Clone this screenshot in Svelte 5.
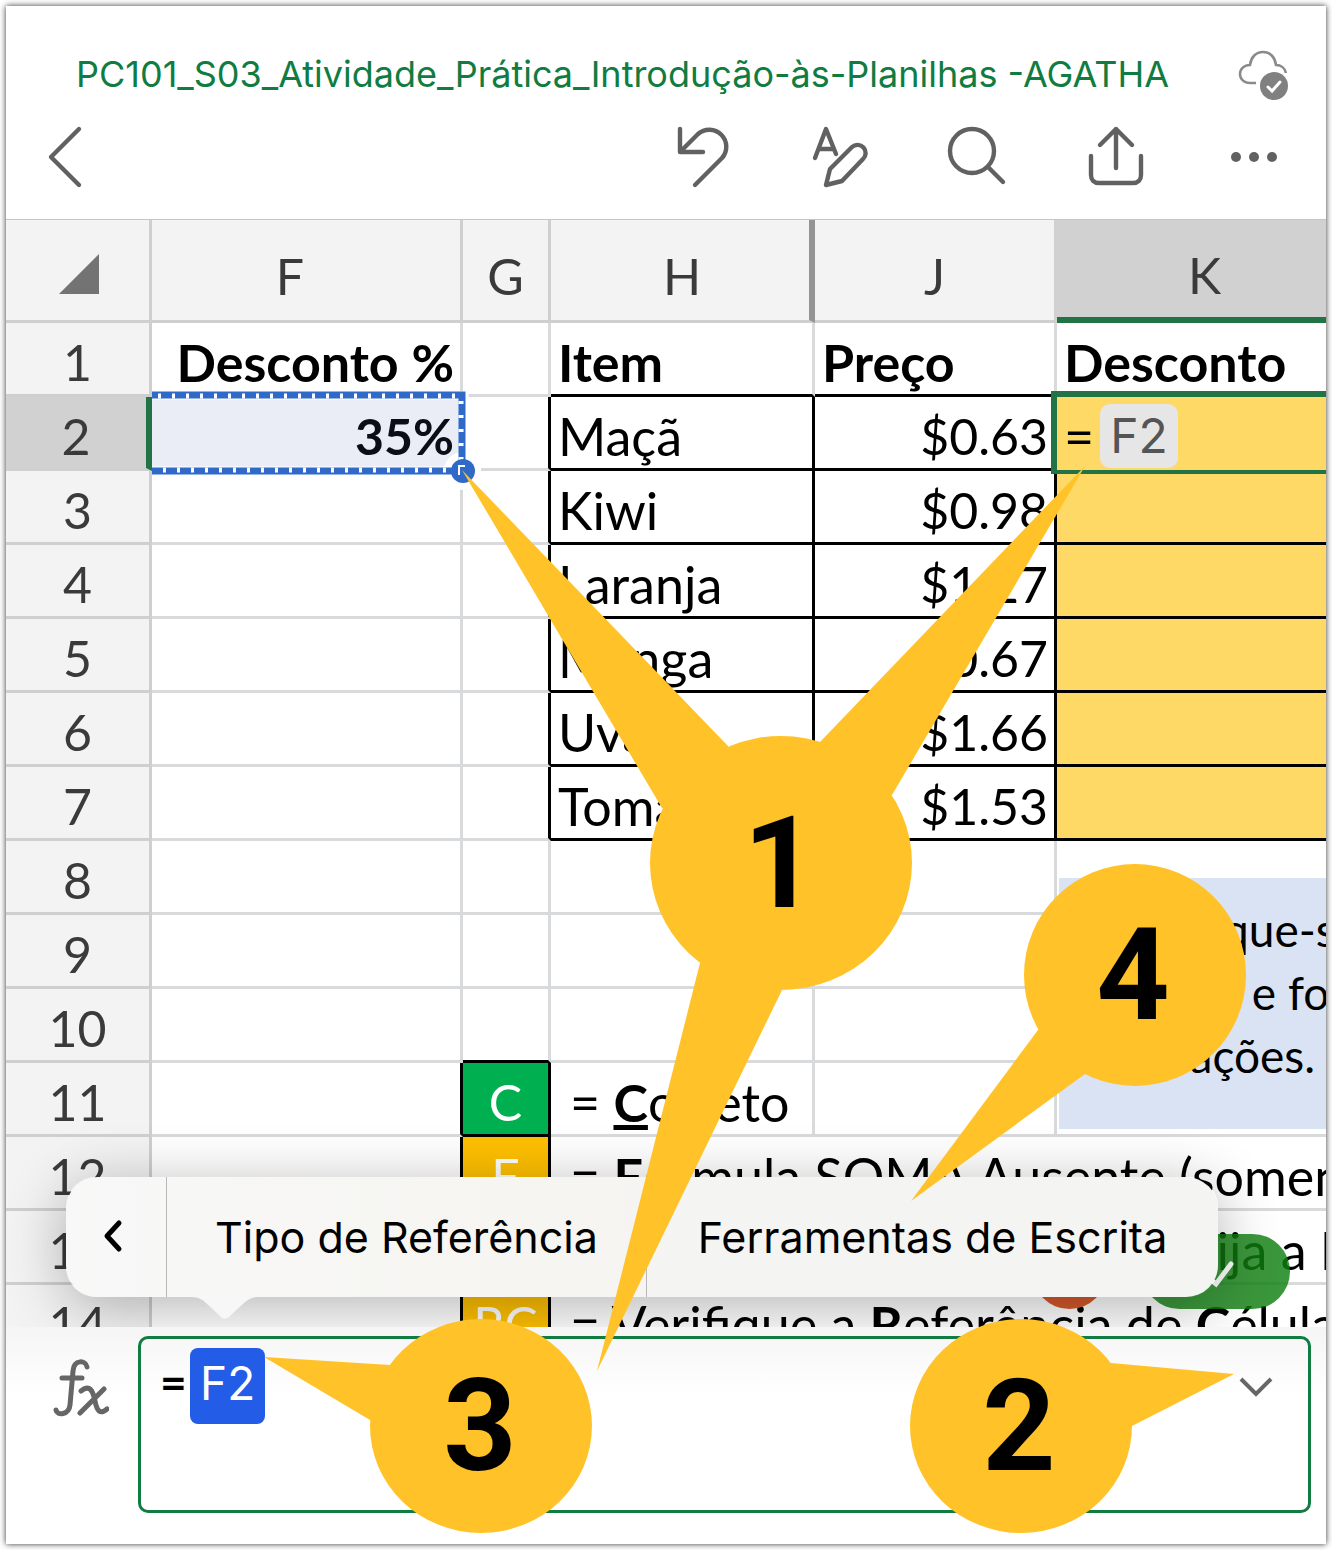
<script>
  const columns = ['F', 'G', 'H', 'J', 'K'];

  const items = [
    { name: 'Maçã', price: '$0.63' },
    { name: 'Kiwi', price: '$0.98' },
    { name: 'Laranja', price: '$1.27' },
    { name: 'Manga', price: '$0.67' },
    { name: 'Uva', price: '$1.66' },
    { name: 'Tomate', price: '$1.53' },
  ];

  const callouts = [
    {
      label: '1',
      cx: 781,
      cy: 863,
      rx: 131,
      ry: 127,
      x: 780,
      y: 907,
      tails: ['462,470 728,746 781,863 662,808', '1085,466 892,795 781,863 820,742', '597,1371 700,963 781,863 782,990'],
    },
    { label: '2', cx: 1021, cy: 1426, rx: 111, ry: 107, x: 1019, y: 1470, tails: ['1234,1374 1111,1363 1021,1426 1132,1426'] },
    { label: '3', cx: 481, cy: 1426, rx: 111, ry: 107, x: 480, y: 1470, tails: ['264,1357 390,1365 481,1426 370,1420'] },
    { label: '4', cx: 1135, cy: 975, rx: 111, ry: 111, x: 1133, y: 1019, tails: ['911,1201 1038,1030 1135,975 1085,1074'] },
  ];
</script>

<div class="frame">
  <main>
    <header>
      <div class="title-row">
        <h1>PC101_S03_Atividade_Prática_Introdução-às-Planilhas -AGATHA</h1>
        <svg class="cloud" viewBox="0 -2 52 52" aria-label="Salvo">
          <path
            d="M18 33h-6C6 33 2 29 2 24s4-9 10-9c1-8 6-13 13-13s12 5 13 13c5 0 9 3 10 8"
            fill="none"
            stroke="#8a8a8a"
            stroke-width="2.5"
          />
          <circle cx="36" cy="36" r="16" fill="#fff" />
          <circle cx="36" cy="36" r="14" fill="#808080" />
          <path d="M30 37l4 4 8-9" fill="none" stroke="#fff" stroke-width="3" stroke-linecap="round" />
        </svg>
      </div>
      <div class="toolbar">
        <button aria-label="Voltar">
          <svg viewBox="0 0 64 64"><path d="M45 4 17 32l28 28" /></svg>
        </button>
        <span class="spacer"></span>
        <button aria-label="Desfazer">
          <svg viewBox="0 0 64 64"><path d="M10 4v23h23M10 27 28 9a17 17 0 0 1 24 24L25 60" /></svg>
        </button>
        <button aria-label="Formatar">
          <svg viewBox="0 0 64 64">
            <path d="M7 33 18 4l10 25M11 24h14M18 60l4-16 22-22a8 8 0 0 1 11 12L34 56z" />
          </svg>
        </button>
        <button aria-label="Pesquisar">
          <svg viewBox="0 0 64 64"><circle cx="26" cy="26" r="22" /><path d="M42 42l15 15" /></svg>
        </button>
        <button aria-label="Compartilhar">
          <svg viewBox="0 0 64 64">
            <path d="M32 43V4M16 20 32 4l16 16M7 31v19c0 5 3 8 8 8h34c5 0 8-3 8-8V31" />
          </svg>
        </button>
        <button aria-label="Mais">
          <svg class="dots" viewBox="0 0 64 64">
            <circle cx="14" cy="32" r="5" /><circle cx="32" cy="32" r="5" /><circle cx="50" cy="32" r="5" />
          </svg>
        </button>
      </div>
    </header>

    <section class="sheet">
      <table>
        <colgroup>
          <col class="col-row" />
          <col class="col-f" />
          <col class="col-g" />
          <col class="col-h" />
          <col class="col-j" />
          <col class="col-k" />
        </colgroup>
        <thead>
          <tr>
            <th class="corner"><svg viewBox="0 0 40 40"><path d="M40 0v40H0z" /></svg></th>
            {#each columns as column}
              <th class="head-{column.toLowerCase()}">{column}</th>
            {/each}
          </tr>
        </thead>
        <tbody>
          <tr class="titles">
            <th>1</th>
            <td class="right">Desconto %</td>
            <td></td>
            <td class="under">Item</td>
            <td class="under">Preço</td>
            <td class="under">Desconto</td>
          </tr>
          {#each items as item, i}
            <tr>
              <th class:active={i === 0}>{i + 2}</th>
              {#if i === 0}
                <td class="right number picked">
                  35%
                  <svg class="ants" viewBox="0 0 332 100">
                    <circle cx="314" cy="80" r="19" fill="#fff" />
                    <path d="M3 4h312v76H3" fill="none" stroke="#fff" stroke-width="9" />
                    <path d="M3 4h310v76H3" fill="none" stroke="#306ac8" stroke-width="7" />
                    <path d="M3 5h309v74H3" fill="none" stroke="#fff" stroke-width="5" stroke-dasharray="3 11" stroke-dashoffset="-6" />
                    <circle cx="314" cy="80" r="12" fill="#306ac8" />
                    <path d="M310 84v-9h6" fill="none" stroke="#fff" stroke-width="2" />
                  </svg>
                </td>
              {:else}
                <td></td>
              {/if}
              <td class="edge"></td>
              <td class="boxed">{item.name}</td>
              <td class="boxed right number">{item.price}</td>
              <td class="boxed gold" class:selected={i === 0}>
                {#if i === 0}
                  <div class="editing">=<span>F2</span></div>
                {/if}
              </td>
            </tr>
          {/each}
          {#each [8, 9, 10] as row}
            <tr>
              <th>{row}</th>
              <td></td>
              <td class:under={row === 10}></td>
              <td></td>
              <td></td>
              <td class="plain">
                {#if row === 8}
                  <div class="note">
                    <div>Certifique-se</div>
                    <div>valores e fo</div>
                    <div>operações.</div>
                  </div>
                {/if}
              </td>
            </tr>
          {/each}
          <tr>
            <th>11</th>
            <td class="edge"></td>
            <td class="key green">C</td>
            <td class="legend">= <b><u>C</u></b>orreto</td>
            <td></td>
            <td></td>
          </tr>
          <tr class="open">
            <th>12</th>
            <td class="edge"></td>
            <td class="key">F</td>
            <td class="legend" colspan="3">= <b>F</b>ormula SOMA Ausente (somente</td>
          </tr>
          <tr class="open">
            <th>13</th>
            <td class="edge"></td>
            <td class="key"></td>
            <td></td>
            <td></td>
            <td class="fix">Corrija a F</td>
          </tr>
          <tr class="open">
            <th>14</th>
            <td class="edge"></td>
            <td class="key">RC</td>
            <td class="legend" colspan="3">= Verifique a <b>R</b>eferência de <b>C</b>élula</td>
          </tr>
        </tbody>
      </table>

      <div class="actions">
        <button class="cancel" aria-label="Cancelar"></button>
        <button class="confirm" aria-label="Confirmar">
          <svg viewBox="0 0 40 40"><path d="M4 22l12 10L31 12" /></svg>
        </button>
      </div>
      <div class="shade"></div>
    </section>

    <footer>
      <svg class="fx" viewBox="0 0 56 60">
        <path d="M34 9c-1-7-13-8-14 4l-3 34c-1 10-13 11-14 5M9 20h20M28 33c9-7 12 0 14 10s5 14 12 8M51 31 27 55" />
      </svg>
      <div class="formula">
        <input aria-label="Fórmula" value="=" />
        <mark>F2</mark>
        <button aria-label="Expandir">
          <svg viewBox="0 0 36 24"><path d="M3 3l15 15L33 3" /></svg>
        </button>
      </div>
    </footer>
  </main>

  <nav class="popup">
    <button class="prev" aria-label="Anterior">
      <svg viewBox="0 0 24 36"><path d="M18 6 6 19l12 13" /></svg>
    </button>
    <button class="type">Tipo de Referência</button>
    <button class="write">Ferramentas de Escrita</button>
    <svg class="arrow" viewBox="0 0 68 22">
      <path d="M0 0h68c-8 0-12 3-15 6L40 18c-4 5-8 5-12 0L15 6C12 3 8 0 0 0z" />
    </svg>
  </nav>

  <svg class="callouts" viewBox="0 0 1332 1550" width="1332" height="1550">
    {#each callouts as c}
      <ellipse cx={c.cx} cy={c.cy} rx={c.rx} ry={c.ry} />
      {#each c.tails as points}
        <polygon {points} />
      {/each}
      <text x={c.x} y={c.y}>{c.label}</text>
    {/each}
  </svg>
</div>

<style>
  :global(body) {
    margin: 0;
    background: #fff;
  }

  .frame {
    position: relative;
    box-sizing: border-box;
    height: 100vh;
    padding: 6px;
    overflow: hidden;
    font-family: Lato, sans-serif;
  }

  main {
    display: flex;
    flex-direction: column;
    height: 100%;
    background: #fff;
    box-shadow: 0 0 6px #333;
  }

  button {
    padding: 0;
    border: 0;
    background: none;
    font: inherit;
    color: inherit;
  }

  header {
    flex: none;
    box-sizing: border-box;
    height: 214px;
    border-bottom: 1px solid #c4c4c4;
    font-family: Inter, sans-serif;
  }

  .title-row {
    display: flex;
    align-items: center;
    justify-content: space-between;
    padding: 42px 36px 0 70px;
  }

  h1 {
    margin: 0;
    font-size: 36px;
    line-height: 52px;
    font-weight: 400;
    color: #107c41;
    white-space: nowrap;
  }

  .cloud {
    width: 52px;
    height: 52px;
  }

  .toolbar {
    display: flex;
    gap: 74px;
    padding: 25px 40px 0 28px;
  }

  .toolbar svg {
    display: block;
    width: 64px;
    height: 64px;
    fill: none;
    stroke: #616161;
    stroke-width: 4.4;
    stroke-linecap: round;
    stroke-linejoin: round;
  }

  .toolbar .dots {
    fill: #616161;
    stroke: none;
  }

  .spacer {
    flex: 1;
  }

  .sheet {
    position: relative;
    isolation: isolate;
    flex: 1;
    min-height: 0;
    overflow: hidden;
  }

  table {
    width: 100%;
    min-width: 1349px;
    table-layout: fixed;
    border-collapse: separate;
    border-spacing: 0;
    font-size: 52px;
    line-height: 64px;
  }

  .col-row {
    width: 146px;
  }
  .col-f {
    width: 311px;
  }
  .col-g {
    width: 88px;
  }
  .col-h {
    width: 264px;
  }
  .col-j {
    width: 242px;
  }

  th,
  td {
    box-sizing: border-box;
    height: 74px;
    padding: 7px 7px 0;
    border: solid #d9dadc;
    border-width: 0 3px 3px 0;
    white-space: nowrap;
  }

  th {
    padding: 7px 0 0;
    border-color: #cfcfcf;
    background: #f3f3f3;
    font-size: 50px;
    font-weight: 400;
    color: #3a3a3a;
  }

  thead th {
    height: 103px;
    padding-top: 12px;
  }

  .corner svg {
    display: block;
    width: 40px;
    height: 40px;
    margin: -4px 0 0 53px;
    fill: #737373;
  }

  .head-f {
    padding-right: 32px;
  }

  .head-h {
    padding-left: 4px;
    border-right: 6px solid #949494;
  }

  .head-j {
    border-right-color: #d1d1d1;
  }

  .head-k {
    border-bottom: 6px solid #217346;
    background: #d1d1d1;
  }

  .titles td {
    font-weight: 700;
  }

  .right {
    padding-right: 6px;
    text-align: right;
  }

  .number {
    font-size: 50px;
  }

  .active {
    border-right: 6px solid #217346;
    background: #d1d1d1;
  }

  .under {
    border-bottom-color: #000;
  }

  .edge {
    border-right-color: #000;
  }

  .boxed {
    border-color: #000;
  }

  .gold {
    position: relative;
    background: #ffd966;
  }

  .selected {
    border-bottom-color: #ffd966;
  }

  .picked {
    position: relative;
    background: #eaedf6;
    font-weight: 700;
    color: #0b0e17;
  }

  .ants {
    position: absolute;
    z-index: 1;
    left: -3px;
    top: -6px;
    width: 332px;
    height: 100px;
  }

  .editing {
    position: absolute;
    z-index: 1;
    inset: -6px;
    display: flex;
    align-items: center;
    gap: 6px;
    padding: 4px 0 0 7px;
    border: 6px solid #217346;
    border-bottom-width: 4px;
  }

  .editing span {
    padding: 0 10px;
    border-radius: 10px;
    background: #e6e6e6;
    font-family: Inter, sans-serif;
    font-size: 48px;
    color: #555;
  }

  .plain {
    position: relative;
  }

  .note {
    position: absolute;
    z-index: 1;
    left: 2px;
    top: 37px;
    box-sizing: border-box;
    width: 400px;
    height: 251px;
    padding: 20px 0 0 38px;
    background: #dae3f3;
    font-size: 46px;
    line-height: 63px;
  }

  .key {
    padding: 7px 0 0;
    border-color: #000;
    background: #ffc000;
    font-size: 50px;
    text-align: center;
    color: #fff;
  }

  .green {
    background: #00b050;
  }

  .legend {
    padding-left: 19px;
  }

  .open td:not(.edge, .key) {
    border-right: 0;
  }

  .fix {
    padding-left: 58px;
  }

  .actions {
    position: absolute;
    right: 36px;
    bottom: 18px;
    display: flex;
    gap: 35px;
  }

  .cancel,
  .confirm {
    height: 75px;
    border-radius: 38px;
  }

  .cancel {
    width: 75px;
    background: #d65a2c;
  }

  .confirm {
    width: 148px;
    background: rgba(16, 128, 16, 0.82);
  }

  .confirm svg {
    display: block;
    width: 40px;
    margin-left: 58px;
    fill: none;
    stroke: #fff;
    stroke-width: 5;
    stroke-linecap: round;
  }

  .shade {
    position: absolute;
    left: 60px;
    right: 108px;
    bottom: 30px;
    height: 120px;
    border-radius: 30px;
    box-shadow: 0 10px 60px rgba(0, 0, 0, 0.3);
  }

  footer {
    flex: none;
    display: flex;
    align-items: flex-start;
    gap: 29px;
    box-sizing: border-box;
    height: 217px;
    padding: 9px 15px 0 47px;
    background: linear-gradient(#f5f5f5, #fff 70px);
  }

  .fx {
    width: 56px;
    height: 60px;
    margin-top: 22px;
    fill: none;
    stroke: #666;
    stroke-width: 5;
    stroke-linecap: round;
  }

  .formula {
    flex: 1;
    display: flex;
    align-items: flex-start;
    box-sizing: border-box;
    height: 177px;
    padding: 9px 34px 0 19px;
    border: 3px solid #107c41;
    border-radius: 10px;
    font-size: 50px;
  }

  input {
    box-sizing: border-box;
    width: 30px;
    height: 68px;
    padding: 0;
    border: 0;
    outline: 0;
    background: none;
    font: 700 46px/68px Lato, sans-serif;
  }

  mark {
    height: 76px;
    padding: 0 10px;
    border-radius: 8px;
    background: #235ce6;
    font-family: Inter, sans-serif;
    font-size: 46px;
    line-height: 70px;
    color: #fff;
  }

  .formula button {
    margin: 28px 0 0 auto;
  }

  .formula button svg {
    display: block;
    width: 36px;
    height: 24px;
    fill: none;
    stroke: #666;
    stroke-width: 4;
  }

  .popup {
    position: absolute;
    left: 66px;
    right: 114px;
    bottom: 253px;
    display: flex;
    height: 120px;
    border-radius: 32px;
    background: linear-gradient(90deg, #f8f8f8, #f6f5f1 40%, #f4f4f3 60%, #f4f4f2);
    font-family: Inter, sans-serif;
    font-size: 43px;
    color: #000;
  }

  .prev {
    width: 100px;
    padding-right: 6px;
  }

  .prev svg {
    width: 24px;
    height: 36px;
    fill: none;
    stroke: #000;
    stroke-width: 5;
    stroke-linecap: round;
    stroke-linejoin: round;
  }

  .type {
    width: 480px;
  }

  .type,
  .write {
    border-left: 1px solid #b8b8b8;
    white-space: nowrap;
  }

  .write {
    flex: 1;
  }

  .arrow {
    position: absolute;
    left: 125px;
    top: 120px;
    width: 68px;
    height: 22px;
    fill: #f7f7f7;
  }

  .callouts {
    position: absolute;
    left: 0;
    top: 0;
    fill: #ffc229;
    pointer-events: none;
  }

  .callouts text {
    font: 700 128px Roboto, sans-serif;
    text-anchor: middle;
    fill: #000;
  }
</style>
